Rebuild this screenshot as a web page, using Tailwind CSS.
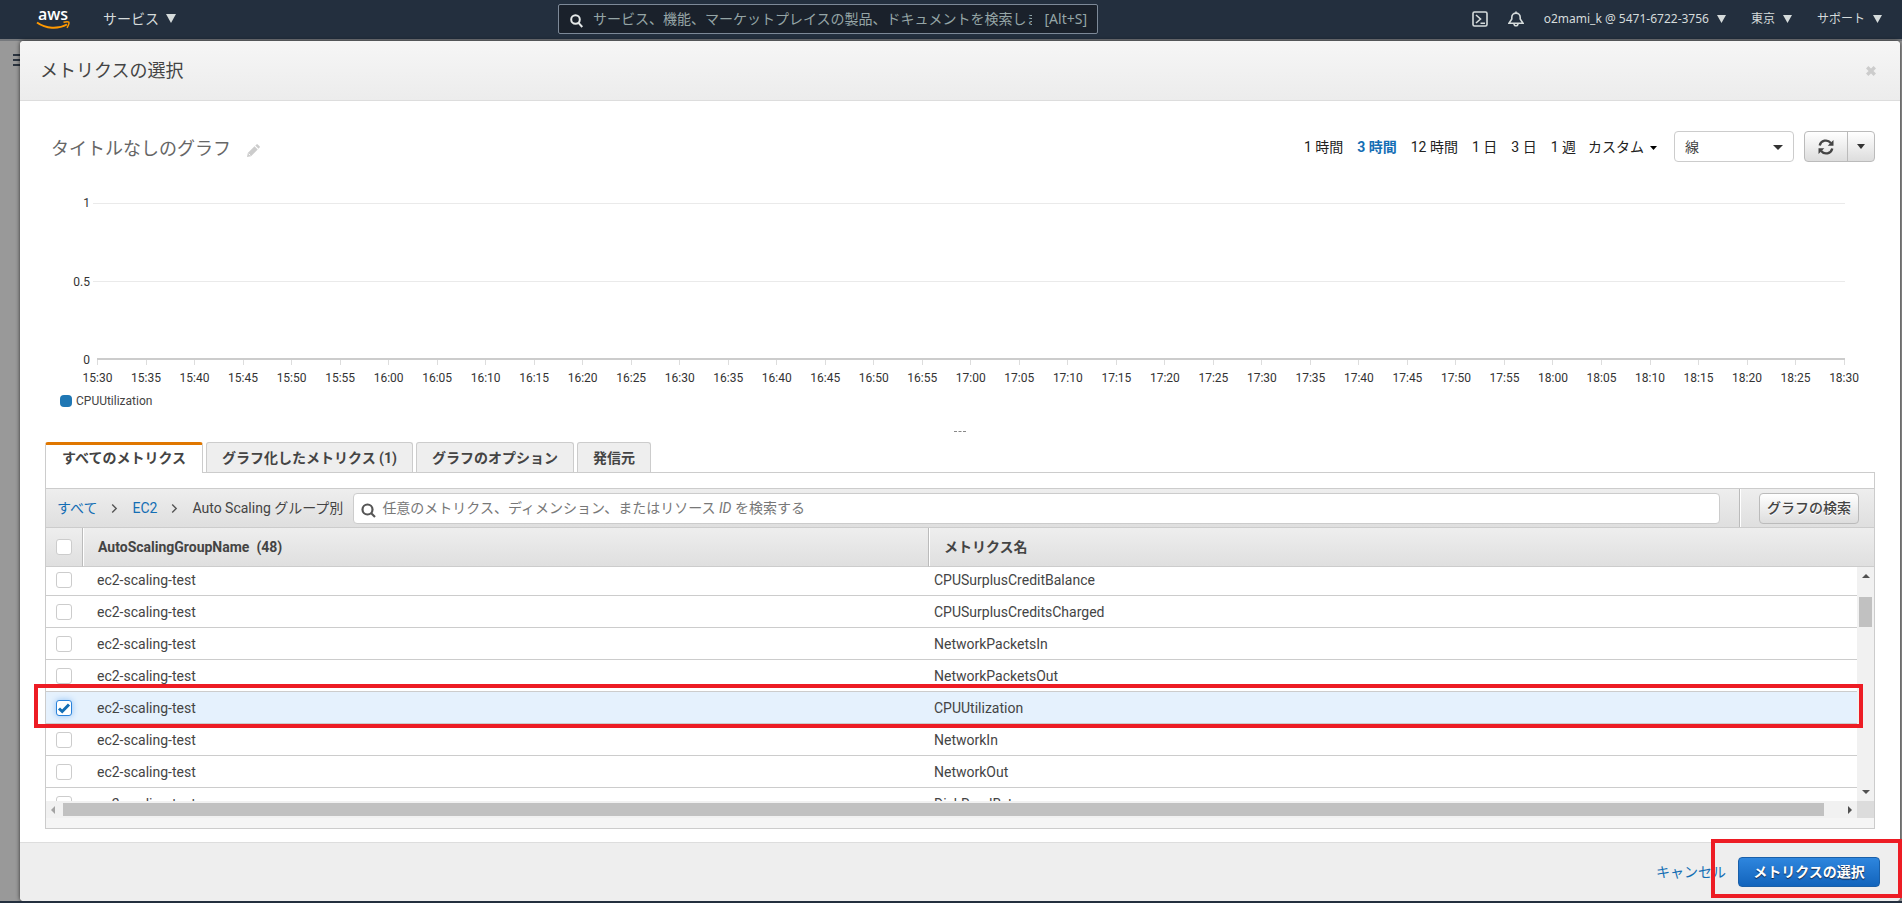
<!DOCTYPE html>
<html lang="ja">
<head>
    <meta charset="UTF-8">
    <meta name="viewport" content="width=device-width, initial-scale=1.0">
    <title>メトリクスの選択 - CloudWatch</title>
    <script src="https://cdn.jsdelivr.net/npm/@tailwindcss/browser@4"></script>
</head>
<body class="h-screen overflow-hidden flex flex-col bg-[#999] border-b-2 border-[#232f3e] text-sm text-[#444] font-['Roboto','Noto_Sans_CJK_JP',sans-serif]">
    <!-- Nav -->
    <header class="h-[41px] shrink-0 flex items-center bg-[#232f3e] border-b-2 border-[#76797d] text-[#d5dbdb] font-['Noto_Sans','Noto_Sans_CJK_JP',sans-serif] pl-9 pr-5 pb-[2px]">
        <div class="w-[522px] flex items-center gap-[33px]">
            <a href="#" aria-label="aws">
                <svg class="w-[34px] h-[24px] overflow-visible" viewBox="0 0 34 24">
                    <text x="17" y="13" text-anchor="middle" font-family="Open Sans, sans-serif" font-size="16" font-weight="600" fill="#fff">aws</text>
                    <path d="M1 15.500C10 22 22 22.500 31 17.500" fill="none" stroke="#f90" stroke-width="2"/>
                    <path d="M27.500 15.300C30 14.800 32 14.600 32.800 15.200C33.300 16.200 32.300 18.800 31 20.800" fill="none" stroke="#f90" stroke-width="1.500"/>
                </svg>
            </a>
            <button class="flex items-center gap-[7px]">サービス
                <svg class="w-[10px] h-[9px] fill-current" viewBox="0 0 10 9"><path d="M0 0h10L5 9z"/></svg>
            </button>
        </div>
        <div class="w-[540px] h-[30px] flex items-center bg-[#1a212b] border border-[#7d8998] rounded-[2px] pl-[11px] pr-[10px]">
            <svg class="w-[13px] h-[14px] mt-1 mr-[10px] shrink-0" viewBox="0 0 13 14" fill="none" stroke="#e5e9e9" stroke-width="2"><circle cx="5.500" cy="5.500" r="4.300"/><path d="M8.500 8.800L12.300 13"/></svg>
            <input type="text" aria-label="検索" class="flex-1 min-w-0 mr-3 bg-transparent outline-none placeholder:text-[#95a5a6]" placeholder="サービス、機能、マーケットプレイスの製品、ドキュメントを検索します">
            <span class="text-[#95a5a6]">[Alt+S]</span>
        </div>
        <div class="flex-1 flex items-center justify-end text-xs">
            <button aria-label="CloudShell" class="mr-5">
                <svg class="w-4 h-4" viewBox="0 0 16 16" fill="none" stroke="currentColor" stroke-width="1.600"><rect x="1" y="1" width="14" height="14" rx="1.500"/><path d="M4 4l4.500 4L4 12M8.500 12.200H13"/></svg>
            </button>
            <button aria-label="通知" class="mr-5">
                <svg class="w-4 h-4" viewBox="0 0 16 16" fill="none" stroke="currentColor" stroke-width="1.600"><path d="M8 .5V2M3.800 8V6.300a4.200 4.200 0 0 1 8.400 0V8L15 12.200H1z"/><path d="M6 12.500a2 2.300 0 0 0 4 0"/></svg>
            </button>
            <button class="flex items-center gap-2 mr-[25px]">o2mami_k @ 5471-6722-3756
                <svg class="w-[9px] h-2 fill-current" viewBox="0 0 9 8"><path d="M0 0h9L4.500 8z"/></svg>
            </button>
            <button class="flex items-center gap-2 mr-[25px]">東京
                <svg class="w-[9px] h-2 fill-current" viewBox="0 0 9 8"><path d="M0 0h9L4.500 8z"/></svg>
            </button>
            <button class="flex items-center gap-2">サポート
                <svg class="w-[9px] h-2 fill-current" viewBox="0 0 9 8"><path d="M0 0h9L4.500 8z"/></svg>
            </button>
        </div>
    </header>

    <div class="flex-1 min-h-0 flex pr-[2px]">
        <!-- Page behind the modal -->
        <aside class="w-5 shrink-0 pl-[13px] pt-[13px]">
            <svg class="w-[7px] h-3" viewBox="0 0 7 12" fill="#2b3440"><path d="M0 0h7v2H0zM0 5h7v2H0zM0 10h7v2H0z"/></svg>
        </aside>

        <!-- Modal -->
        <main class="flex-1 min-w-0 flex flex-col bg-white rounded-[4px] shadow-[0_0_4px_rgba(0,0,0,0.7)]">
            <div class="h-[60px] shrink-0 flex items-center justify-between pl-5 pr-6 bg-linear-to-b from-[#f6f6f6] to-[#ececec] border-b border-[#ddd] rounded-t-[4px]">
                <h1 class="text-lg">メトリクスの選択</h1>
                <button aria-label="閉じる">
                    <svg class="w-[10px] h-[10px]" viewBox="0 0 10 10" stroke="#ccc" stroke-width="3.400"><path d="M1.200 1.200l7.600 7.600M8.800 1.200L1.200 8.800"/></svg>
                </button>
            </div>

            <!-- Graph title and time range -->
            <div class="flex items-center justify-between pl-[31px] pr-[25px] pt-[30px]">
                <div class="flex items-center gap-4 pt-1">
                    <h2 class="text-lg leading-6 text-[#666]">タイトルなしのグラフ</h2>
                    <button aria-label="タイトルの編集">
                        <svg class="w-[13px] h-[13px] mt-1" viewBox="0 0 13 13" fill="#ccc"><path d="M0 13l.8-4L7.500 2.300l3.200 3.200L4 12.200zM8.300 1.500L9.500.4q.6-.6 1.200 0l1.900 1.900q.6.600 0 1.200l-1.100 1.200z"/><path d="M1.600 9.700l1.700 1.700" stroke="#fff"/></svg>
                    </button>
                </div>
                <div class="flex items-center text-[#222]">
                    <button class="mr-[14px]">1 時間</button>
                    <button class="mr-[14px] font-bold text-[#146eb4]">3 時間</button>
                    <button class="mr-[14px]">12 時間</button>
                    <button class="mr-[14px]">1 日</button>
                    <button class="mr-[14px]">3 日</button>
                    <button class="mr-3">1 週</button>
                    <button class="flex items-center gap-[6px] mr-[17px]">カスタム
                        <svg class="w-[7px] h-1 mt-[2px]" viewBox="0 0 7 4"><path d="M0 0h7L3.500 4z"/></svg>
                    </button>
                    <div class="relative mr-[10px]">
                        <select aria-label="グラフの種類" class="block appearance-none w-[120px] h-[31px] pl-[10px] border border-[#ccc] rounded-[4px] bg-white text-[#444]">
                            <option>線</option>
                        </select>
                        <svg class="absolute right-[11px] top-[14px] w-[10px] h-[5px] pointer-events-none" viewBox="0 0 10 5" fill="#333"><path d="M0 0h10L5 5z"/></svg>
                    </div>
                    <div class="flex h-[31px] border border-[#bbb] rounded-[4px] bg-linear-to-b from-white to-[#ddd]">
                        <button aria-label="更新" class="w-[43px] flex items-center justify-center border-r border-[#bbb]">
                            <svg class="w-4 h-4" viewBox="0 0 16 16" fill="none" stroke="#444" stroke-width="2.300"><path d="M1.700 6.500A6.300 6.300 0 0 1 12.800 4M14.300 9.500A6.300 6.300 0 0 1 3.200 12"/><path d="M15.500 1v5.800H9.700zM.5 15V9.200h5.800z" fill="#444" stroke="none"/></svg>
                        </button>
                        <button aria-label="更新間隔" class="w-[26px] flex items-center justify-center">
                            <svg class="w-2 h-[5px]" viewBox="0 0 8 5" fill="#333"><path d="M0 0h8L4 5z"/></svg>
                        </button>
                    </div>
                </div>
            </div>

            <!-- Graph -->
            <div class="pt-[41px] pl-10 pr-[55px] text-xs text-[#333]">
                <div class="flex h-[157px] gap-[3px]">
                    <div class="w-[30px] flex flex-col justify-between text-right leading-[0px]">
                        <span>1</span><span>0.5</span><span>0</span>
                    </div>
                    <div class="flex-1 flex flex-col justify-between">
                        <div class="h-px bg-[#eaeaea]"></div>
                        <div class="h-px bg-[#eaeaea]"></div>
                        <div class="h-[2px] bg-[#ccc] ml-1"></div>
                    </div>
                </div>
                <div id="timeAxis" class="flex justify-between pl-[37px]"></div>
                <div class="flex items-center gap-1 h-4 mt-[7px]">
                    <span class="w-3 h-3 rounded-[4px] bg-[#1f77b4]"></span>
                    <span class="text-[#444]">CPUUtilization</span>
                </div>
            </div>

            <div class="h-[33px] shrink-0 pt-[22px] flex justify-center"><span class="w-3 h-px border-t border-dashed border-[#888]"></span></div>

            <!-- Tabs -->
            <div class="mx-[25px] flex-1 min-h-0 flex flex-col">
                <nav class="flex gap-[3px] h-[31px] shrink-0 border-b border-[#ccc]">
                    <button class="relative h-[31px] px-4 bg-white border-x border-t-3 border-x-[#ccc] border-t-[#e07700] rounded-t-[3px] font-bold pb-[3px]">すべてのメトリクス</button>
                    <button class="h-[30px] px-[15px] bg-[#eee] border border-b-0 border-[#ccc] rounded-t-[3px] font-bold">グラフ化したメトリクス (1)</button>
                    <button class="h-[30px] px-[15px] bg-[#eee] border border-b-0 border-[#ccc] rounded-t-[3px] font-bold">グラフのオプション</button>
                    <button class="h-[30px] px-[15px] bg-[#eee] border border-b-0 border-[#ccc] rounded-t-[3px] font-bold">発信元</button>
                </nav>

                <div class="flex-1 min-h-0 flex flex-col border-x border-b border-[#ccc] pt-[15px]">
                    <!-- Breadcrumb and search -->
                    <div class="h-10 shrink-0 flex items-stretch border-y border-[#ccc] bg-linear-to-b from-[#eee] to-[#dfdfdf]">
                        <div class="flex-1 flex items-center pl-[11px] pr-[19px]">
                            <a href="#" class="text-[#146eb4]">すべて</a>
                            <svg class="w-[7px] h-[9px] mx-[14px]" viewBox="0 0 7 9" fill="none" stroke="#555" stroke-width="1.400"><path d="M1.200.500l4 4-4 4"/></svg>
                            <a href="#" class="text-[#146eb4]">EC2</a>
                            <svg class="w-[7px] h-[9px] mx-[14px]" viewBox="0 0 7 9" fill="none" stroke="#555" stroke-width="1.400"><path d="M1.200.500l4 4-4 4"/></svg>
                            <span class="mr-[10px]">Auto Scaling グループ別</span>
                            <label class="flex-1 h-[31px] flex items-center gap-[6px] px-[7px] bg-white border border-[#ccc] rounded-[4px]">
                                <svg class="w-[15px] h-[15px] mt-1" viewBox="0 0 15 15" fill="none" stroke="#555" stroke-width="2.200"><circle cx="6.500" cy="6.500" r="5"/><path d="M10 10l4 4"/></svg>
                                <span class="relative flex-1 h-full flex items-center">
                                    <input type="text" aria-label="メトリクスの検索" class="absolute inset-0 w-full bg-transparent outline-none">
                                    <span class="text-[#777]">任意のメトリクス、ディメンション、またはリソース <i>ID</i> を検索する</span>
                                </span>
                            </label>
                        </div>
                        <div class="w-[135px] flex items-center pl-[19px] border-l border-[#bbb] shadow-[inset_1px_0_0_#fff]">
                            <button class="w-[100px] h-[31px] border border-[#bbb] rounded-[4px] bg-linear-to-b from-white to-[#ddd] font-medium text-shadow-[0_1px_0_#fff]">グラフの検索</button>
                        </div>
                    </div>

                    <!-- Metrics header -->
                    <table class="table-fixed border-separate border-spacing-0 w-full shrink-0">
                        <colgroup><col class="w-9"><col class="w-[846px]"><col></colgroup>
                        <thead>
                            <tr class="text-left bg-linear-to-b from-[#eee] to-[#dfdfdf]">
                                <th class="h-[39px] pl-[10px] border-b border-[#ccc]"><input type="checkbox" aria-label="すべて選択" class="block appearance-none w-4 h-4 bg-white border border-[#ccc] rounded-[3px]"></th>
                                <th class="h-[39px] pl-[15px] border-l border-b border-l-[#bbb] border-b-[#ccc] shadow-[inset_1px_0_0_#fff]">AutoScalingGroupName&nbsp; (48)</th>
                                <th class="h-[39px] pl-[15px] border-l border-b border-l-[#bbb] border-b-[#ccc] shadow-[inset_1px_0_0_#fff]">メトリクス名</th>
                            </tr>
                        </thead>
                    </table>

                    <!-- Metrics list -->
                    <div class="flex-1 min-h-0 flex">
                        <div class="flex-1 min-w-0 overflow-hidden">
                            <table class="table-fixed border-separate border-spacing-0 w-full -mt-[3px]">
                                <colgroup><col class="w-9"><col class="w-[837px]"><col></colgroup>
                                <tbody id="metricRows"></tbody>
                            </table>
                        </div>
                        <div class="w-[17px] bg-[#f1f1f1] flex flex-col items-center justify-between py-[7px]">
                            <div class="flex flex-col items-center gap-[19px]">
                                <svg class="w-2 h-1" viewBox="0 0 8 4" fill="#505050"><path d="M0 4h8L4 0z"/></svg>
                                <div class="w-[13px] h-[30px] bg-[#c1c1c1]"></div>
                            </div>
                            <svg class="w-2 h-1" viewBox="0 0 8 4" fill="#505050"><path d="M0 0h8L4 4z"/></svg>
                        </div>
                    </div>
                    <div class="h-[17px] shrink-0 flex bg-[#f1f1f1]">
                        <div class="flex-1 flex items-center pl-[5px] pr-[5px]">
                            <svg class="w-1 h-2" viewBox="0 0 4 8" fill="#a3a3a3"><path d="M4 0v8L0 4z"/></svg>
                            <div class="flex-1 h-[13px] bg-[#c1c1c1] ml-2 mr-6"></div>
                            <svg class="w-1 h-2" viewBox="0 0 4 8" fill="#505050"><path d="M0 0v8l4-4z"/></svg>
                        </div>
                        <div class="w-[17px] bg-[#dcdcdc]"></div>
                    </div>
                    <div class="h-[10px] shrink-0 bg-[#f5f5f5]"></div>
                </div>
            </div>

            <!-- Modal footer -->
            <div class="h-[59px] mt-[13px] shrink-0 flex items-center justify-end gap-3 pr-5 bg-[#eee] border-t border-[#ddd] rounded-b-[4px]">
                <a href="#" class="text-[#146eb4]">キャンセル</a>
                <button class="w-[142px] h-[30px] border border-[#1a5fa8] rounded-[4px] bg-linear-to-b from-[#2e86de] to-[#1264bc] text-white font-bold text-shadow-[0_1px_1px_#124]">メトリクスの選択</button>
            </div>
        </main>
    </div>

    <!-- Callouts -->
    <div class="absolute left-[34px] right-[39px] bottom-[175px] h-11 border-4 border-[#ed1c24] pointer-events-none"></div>
    <div class="absolute right-0 bottom-[5px] w-[191px] h-[59px] border-4 border-[#ed1c24] pointer-events-none"></div>

    <script>
        // one tick every five minutes, 15:30 - 18:30
        let ticks = '';
        for (let m = 930; m <= 1110; m += 5) {
            const label = Math.floor(m / 60) + ':' + String(m % 60).padStart(2, '0');
            ticks += `<div class="w-px flex flex-col items-center"><span class="w-px h-[5px] bg-[#ddd]"></span><span class="mt-[5px] leading-4">${label}</span></div>`;
        }
        document.getElementById('timeAxis').innerHTML = ticks;

        const metrics = ['CPUSurplusCreditBalance', 'CPUSurplusCreditsCharged', 'NetworkPacketsIn', 'NetworkPacketsOut', 'CPUUtilization', 'NetworkIn', 'NetworkOut', 'DiskReadBytes'];
        document.getElementById('metricRows').innerHTML = metrics.map(name => {
            const on = name === 'CPUUtilization';
            return `<tr class="${on ? 'bg-[#e5f1fd]' : 'bg-white'}">
                <td class="h-8 pl-[10px] border-b border-[#ccc]"><span class="relative block w-4 h-4">
                    <input type="checkbox" aria-label="${name}" ${on ? 'checked' : ''} class="block appearance-none w-4 h-4 bg-white border border-[#ccc] rounded-[3px] checked:border-[#2a82da] checked:shadow-[0_0_6px_#8fc1f5]">
                    ${on ? '<svg class="absolute inset-0 w-4 h-4 pointer-events-none" viewBox="0 0 16 16" fill="none" stroke="#146eb4" stroke-width="3"><path d="M3 8.500l3.200 3L13 4.500"/></svg>' : ''}
                </span></td>
                <td class="h-8 pl-[15px] border-b border-[#ccc]">ec2-scaling-test</td>
                <td class="h-8 pl-[15px] border-b border-[#ccc]">${name}</td>
            </tr>`;
        }).join('');
    </script>
</body>
</html>
